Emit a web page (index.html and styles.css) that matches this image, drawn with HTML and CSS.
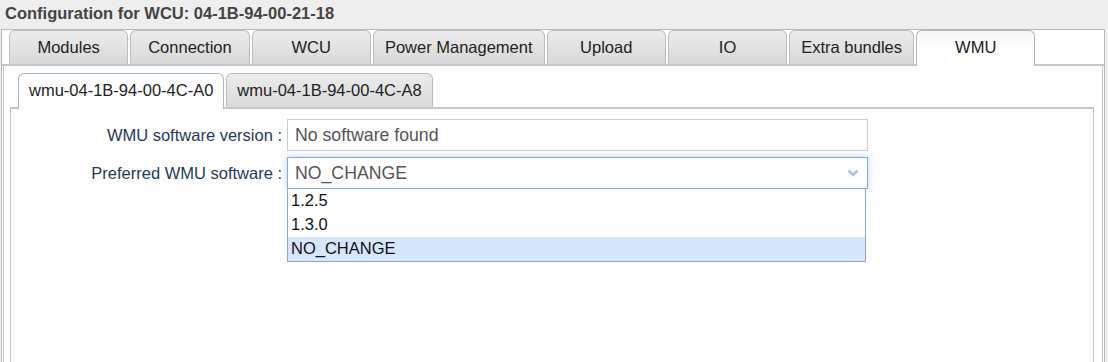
FILE: index.html
```html
<!DOCTYPE html>
<html lang="en">
<head>
  <meta charset="UTF-8">
  <title>Configuration for WCU</title>
  <link rel="stylesheet" href="styles.css">
</head>
<body>

<div class="page-title">Configuration for WCU: 04-1B-94-00-21-18</div>

<div class="tabs">
  <ul class="tab-nav">
    <li class="tab">Modules</li>
    <li class="tab">Connection</li>
    <li class="tab">WCU</li>
    <li class="tab">Power Management</li>
    <li class="tab">Upload</li>
    <li class="tab">IO</li>
    <li class="tab">Extra bundles</li>
    <li class="tab active">WMU</li>
  </ul>

  <div class="tab-panel">
    <div class="sub-tabs">
      <ul class="sub-nav">
        <li class="sub-tab active">wmu-04-1B-94-00-4C-A0</li>
        <li class="sub-tab">wmu-04-1B-94-00-4C-A8</li>
      </ul>

      <div class="sub-panel">
        <div class="form">
          <label class="form-label">WMU software version :</label>
          <div class="field">No software found</div>

          <label class="form-label">Preferred WMU software :</label>
          <div class="select-wrap">
            <div class="field select">
              <span>NO_CHANGE</span>
              <svg class="chevron" width="12" height="8" viewBox="0 0 12 8">
                <polyline points="1.5,1.5 6,6 10.5,1.5" fill="none" stroke="#a9c6ea" stroke-width="2.6"/>
              </svg>
            </div>
            <ul class="dropdown">
              <li>1.2.5</li>
              <li>1.3.0</li>
              <li class="selected">NO_CHANGE</li>
            </ul>
          </div>
        </div>
      </div>
    </div>
  </div>
</div>

</body>
</html>
```

FILE: styles.css
```css
/* general */
body {
  margin: 0;
  background-color: #eeeeee;
  font-family: "Liberation Sans", Arial, sans-serif;
  font-size: 16.5px;
  color: #222;
  height: 100vh;
  overflow: hidden;
  display: flex;
  flex-direction: column;
}

ul {
  list-style: none;
  margin: 0;
}

/* title */
.page-title {
  height: 29px;
  line-height: 26px;
  padding-left: 5px;
  font-weight: bold;
  color: #444;
}

/* main tabs - the boxes are open at the bottom, as the window cuts them off */
.tabs {
  flex: 1;
  width: 1104px;
  margin-left: 1px;
  box-sizing: border-box;
  border: 1px solid #b9b9b9;
  border-bottom: none;
  background-color: #fff;
  display: flex;
  flex-direction: column;
}

.tab-nav {
  display: flex;
  align-items: flex-end;
  gap: 2px;
  padding: 0 0 0 7px;
  height: 34px;
  border-bottom: 2px solid #c3c7cb;
}

.tab {
  box-sizing: border-box;
  min-width: 119.3px;
  height: 34px;
  line-height: 32px;
  padding: 0 11px;
  text-align: center;
  border: 1px solid #bdbdbd;
  border-bottom: none;
  border-radius: 6px 6px 0 0;
  background: linear-gradient(#ececec, #d8d8d8);
}

.tab.active {
  height: 36px;
  margin-bottom: -2px;
  border-color: #a9b7c9;
  background: linear-gradient(#f6f6f6, #ffffff 60%);
}

.tab-panel {
  flex: 1;
  margin: 0 1px;
  border: 1px solid #c6c6c6;
  border-top: none;
  border-bottom: none;
  display: flex;
  flex-direction: column;
}

/* sub tabs */
.sub-tabs {
  flex: 1;
  margin: 0 8px 0 6px;
  display: flex;
  flex-direction: column;
}

.sub-nav {
  display: flex;
  align-items: flex-end;
  gap: 2px;
  padding: 7px 0 0 8px;
  border-bottom: 2px solid #c3c7cb;
}

.sub-tab {
  box-sizing: border-box;
  height: 34px;
  line-height: 32px;
  padding: 0 10px;
  border: 1px solid #bdbdbd;
  border-bottom: none;
  border-radius: 6px 6px 0 0;
  background: linear-gradient(#ececec, #d9d9d9);
}

.sub-tab.active {
  height: 36px;
  margin-bottom: -2px;
  border-color: #a9b7c9;
  background: #fff;
}

.sub-panel {
  flex: 1;
  border: 1px solid #c6c6c6;
  border-top: none;
  border-bottom: none;
}

/* form */
.form {
  display: grid;
  grid-template-columns: 271px 581px;
  column-gap: 5px;
  row-gap: 6px;
  align-items: center;
  padding-top: 10px;
}

.form-label {
  text-align: right;
  color: #263a58;
}

.field {
  box-sizing: border-box;
  height: 32px;
  line-height: 30px;
  padding-left: 7px;
  border: 1px solid #cccccc;
  font-size: 17.7px;
  color: #555;
  background-color: #fff;
}

.select-wrap {
  position: relative;
}

.select {
  display: flex;
  justify-content: space-between;
  align-items: center;
  padding-right: 8px;
  border-color: #82aadb;
  box-shadow: 0 0 7px rgba(110, 160, 225, 0.45);
}

.chevron {
  display: block;
}

.dropdown {
  position: absolute;
  top: 100%;
  left: 0;
  width: 579px;
  box-sizing: border-box;
  padding: 0;
  border: 1px solid #8ba8cc;
  border-top: none;
  background-color: #fff;
  z-index: 5;
}

.dropdown li {
  height: 24px;
  line-height: 23px;
  padding-left: 3px;
  color: #111;
}

.dropdown li.selected {
  background-color: #d7e6fc;
}
```
